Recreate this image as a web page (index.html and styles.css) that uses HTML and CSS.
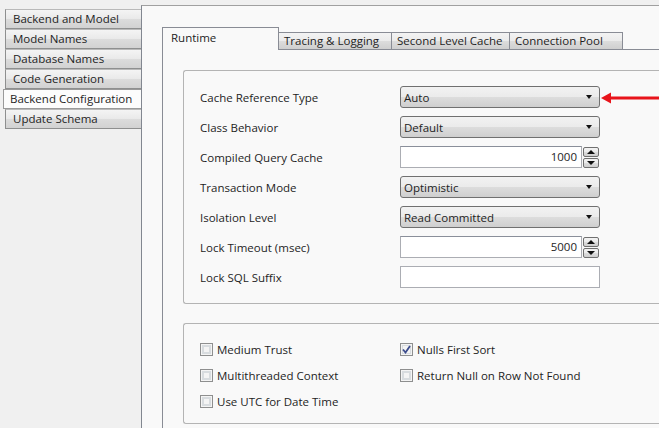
FILE: index.html
```html
<!DOCTYPE html>
<html>
<head>
<meta charset="utf-8">
<link rel="stylesheet" href="styles.css">
</head>
<body>
<div class="app">
  <nav class="sidebar">
    <div class="nav-item">Backend and Model</div>
    <div class="nav-item">Model Names</div>
    <div class="nav-item">Database Names</div>
    <div class="nav-item">Code Generation</div>
    <div class="nav-item selected">Backend Configuration</div>
    <div class="nav-item">Update Schema</div>
  </nav>
  <main class="main">
    <div class="tabs">
      <div class="tab active w117">Runtime</div>
      <div class="tab w113">Tracing &amp; Logging</div>
      <div class="tab w118">Second Level Cache</div>
      <div class="tab w113">Connection Pool</div>
    </div>
    <div class="tab-panel">
      <section class="group settings">
        <div class="row"><span class="label">Cache Reference Type</span><div class="combo"><span>Auto</span><i class="caret"></i></div></div>
        <div class="row"><span class="label">Class Behavior</span><div class="combo"><span>Default</span><i class="caret"></i></div></div>
        <div class="row"><span class="label">Compiled Query Cache</span><div class="spin"><div class="spin-text">1000</div><div class="spin-btns"><div class="sbtn"><i class="up"></i></div><div class="sbtn"><i class="down"></i></div></div></div></div>
        <div class="row"><span class="label">Transaction Mode</span><div class="combo"><span>Optimistic</span><i class="caret"></i></div></div>
        <div class="row"><span class="label">Isolation Level</span><div class="combo"><span>Read Committed</span><i class="caret"></i></div></div>
        <div class="row"><span class="label">Lock Timeout (msec)</span><div class="spin"><div class="spin-text">5000</div><div class="spin-btns"><div class="sbtn"><i class="up"></i></div><div class="sbtn"><i class="down"></i></div></div></div></div>
        <div class="row"><span class="label">Lock SQL Suffix</span><div class="textbox"></div></div>
      </section>
      <section class="group checks">
        <label class="check"><span class="box"></span>Medium Trust</label>
        <label class="check"><span class="box checked"><svg width="9" height="9" viewBox="0 0 9 9"><path d="M1 4.5 L3.5 7.5 L8 1" fill="none" stroke="#3c4c8c" stroke-width="1.8"/></svg></span>Nulls First Sort</label>
        <label class="check"><span class="box"></span>Multithreaded Context</label>
        <label class="check"><span class="box"></span>Return Null on Row Not Found</label>
        <label class="check"><span class="box"></span>Use UTC for Date Time</label>
      </section>
    </div>
  </main>
  <svg class="arrow" width="59" height="14" viewBox="0 0 59 14">
    <polygon points="1,7 11,1.5 11,12.5" fill="#e8141b"/>
    <rect x="10" y="5.5" width="49" height="3" fill="#e8141b"/>
  </svg>
</div>
</body>
</html>
```

FILE: styles.css
```css
html, body {
  margin: 0;
  padding: 0;
  overflow: hidden;
}
body {
  background: #f0f0f0;
  font-family: "Open Sans", "Noto Sans", sans-serif;
  font-size: 11.5px;
  color: #1e1e1e;
}
.app {
  position: relative;
  display: flex;
  width: 659px;
  height: 428px;
  overflow: hidden;
}
.sidebar {
  width: 141px;
  flex: none;
  padding-top: 9px;
  display: flex;
  flex-direction: column;
  align-items: flex-end;
}
.nav-item {
  box-sizing: border-box;
  width: 136px;
  height: 20px;
  line-height: 18px;
  padding-left: 7px;
  border: 1px solid #8e8f8f;
  border-top-color: #b9b9b9;
  border-right: none;
  background: linear-gradient(#f4f4f4, #e9e9e9 50%, #dcdcdc 50%, #d2d2d2);
  white-space: nowrap;
}
.nav-item.selected {
  width: 138px;
  padding-left: 6px;
  background: #fcfcfc;
  border-color: #9a9a9a;
}
.main {
  flex: 1;
  min-width: 0;
  margin-top: 5px;
  border-left: 1px solid #828790;
  border-top: 1px solid #a0a0a0;
  background: #f9f9f9;
  padding: 21px 0 0 20px;
  display: flex;
  flex-direction: column;
}
.tabs {
  display: flex;
  align-items: flex-end;
  height: 22px;
  flex: none;
  position: relative;
  z-index: 1;
}
.tab {
  box-sizing: border-box;
  height: 17px;
  line-height: 15px;
  padding-left: 5px;
  border: 1px solid #898c95;
  border-bottom: none;
  border-left: none;
  background: linear-gradient(#f3f3f3, #ebebeb 50%, #dddddd 50%, #cfcfcf);
  white-space: nowrap;
}
.tab.active {
  height: 23px;
  line-height: 20px;
  padding-left: 8px;
  border-left: 1px solid #898c95;
  background: #f9f9f9;
  margin-bottom: -1px;
}
.w117 { width: 117px; }
.w113 { width: 113px; }
.w118 { width: 118px; }
.tab-panel {
  flex: 1;
  border-left: 1px solid #898c95;
  border-top: 1px solid #898c95;
  padding: 20px 0 0 20px;
}
.group {
  box-sizing: border-box;
  border: 1px solid #b4b4b4;
  border-right: none;
  border-radius: 3px 0 0 3px;
}
.settings {
  height: 234px;
  padding: 15px 0 0 16px;
  display: flex;
  flex-direction: column;
  gap: 8px;
}
.row {
  display: flex;
  align-items: center;
  height: 22px;
}
.label {
  width: 200px;
  flex: none;
}
.combo {
  box-sizing: border-box;
  width: 200px;
  height: 22px;
  border: 1px solid #707070;
  border-radius: 3px;
  background: linear-gradient(#f2f2f2, #ebebeb 50%, #dddddd 50%, #cfcfcf);
  display: flex;
  align-items: center;
  justify-content: space-between;
  padding: 0 7px 0 3px;
}
.caret {
  width: 0;
  height: 0;
  border-left: 3.5px solid transparent;
  border-right: 3.5px solid transparent;
  border-top: 4px solid #111;
}
.spin {
  display: flex;
  align-items: center;
  gap: 1px;
  height: 22px;
}
.spin-text {
  box-sizing: border-box;
  width: 182px;
  height: 22px;
  border: 1px solid #abadb3;
  border-top-color: #8a8f9a;
  background: #fff;
  text-align: right;
  line-height: 20px;
  padding-right: 4px;
}
.spin-btns {
  display: flex;
  flex-direction: column;
  gap: 1px;
}
.sbtn {
  box-sizing: border-box;
  width: 16px;
  height: 10px;
  border: 1px solid #707070;
  border-radius: 2px;
  background: linear-gradient(#f2f2f2, #ebebeb 50%, #dddddd 50%, #cfcfcf);
  display: flex;
  align-items: center;
  justify-content: center;
}
.up, .down {
  width: 0;
  height: 0;
  border-left: 4px solid transparent;
  border-right: 4px solid transparent;
}
.up { border-bottom: 4px solid #111; }
.down { border-top: 4px solid #111; }
.textbox {
  box-sizing: border-box;
  width: 200px;
  height: 22px;
  border: 1px solid #abadb3;
  background: #fff;
}
.checks {
  margin-top: 19px;
  height: 101px;
  padding: 19px 0 0 16px;
  display: grid;
  grid-template-columns: 200px 200px;
  grid-auto-rows: 13px;
  row-gap: 13px;
}
.check {
  display: flex;
  align-items: center;
  gap: 4px;
  white-space: nowrap;
  line-height: 13px;
}
.box {
  box-sizing: border-box;
  width: 13px;
  height: 13px;
  border: 1px solid #8e8f8f;
  background: #f4f4f4;
  box-shadow: inset 0 0 0 1px #f4f4f4, inset 0 0 0 3px #d8dcdf;
  display: flex;
  align-items: center;
  justify-content: center;
  flex: none;
}
.box.checked {
  box-shadow: inset 0 0 0 1px #f4f4f4, inset 0 0 0 2px #d8dcdf;
}
.arrow {
  position: absolute;
  left: 600px;
  top: 91px;
}
```
